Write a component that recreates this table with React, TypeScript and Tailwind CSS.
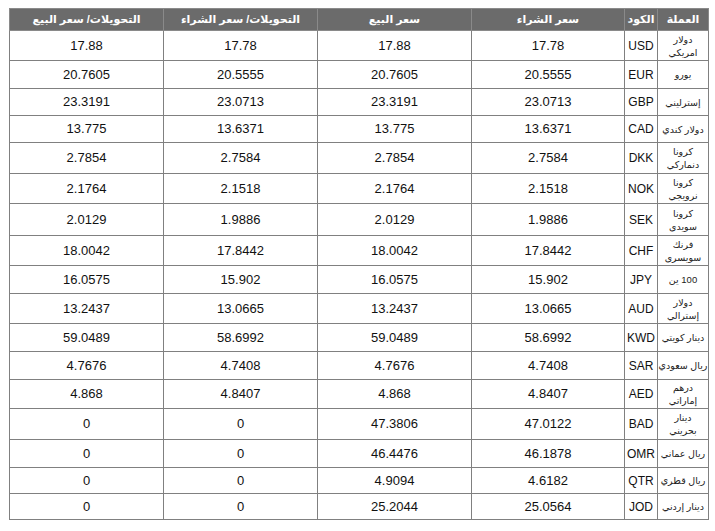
import React from "react";

interface Rate {
  name: string[];
  code: string;
  buy: string;
  sell: string;
  tBuy: string;
  tSell: string;
  h: string;
}

const rates: Rate[] = [
  { name: ["دولار", "امريكي"], code: "USD", buy: "17.78", sell: "17.88", tBuy: "17.78", tSell: "17.88", h: "h-[30px]" },
  { name: ["يورو"], code: "EUR", buy: "20.5555", sell: "20.7605", tBuy: "20.5555", tSell: "20.7605", h: "h-[28px]" },
  { name: ["إسترليني"], code: "GBP", buy: "23.0713", sell: "23.3191", tBuy: "23.0713", tSell: "23.3191", h: "h-[27px]" },
  { name: ["دولار كندي"], code: "CAD", buy: "13.6371", sell: "13.775", tBuy: "13.6371", tSell: "13.775", h: "h-[27px]" },
  { name: ["كرونا", "دنماركي"], code: "DKK", buy: "2.7584", sell: "2.7854", tBuy: "2.7584", tSell: "2.7854", h: "h-[31px]" },
  { name: ["كرونا", "نرويجي"], code: "NOK", buy: "2.1518", sell: "2.1764", tBuy: "2.1518", tSell: "2.1764", h: "h-[30px]" },
  { name: ["كرونا", "سويدى"], code: "SEK", buy: "1.9886", sell: "2.0129", tBuy: "1.9886", tSell: "2.0129", h: "h-[32px]" },
  { name: ["فرنك", "سويسرى"], code: "CHF", buy: "17.8442", sell: "18.0042", tBuy: "17.8442", tSell: "18.0042", h: "h-[30px]" },
  { name: ["100 ين"], code: "JPY", buy: "15.902", sell: "16.0575", tBuy: "15.902", tSell: "16.0575", h: "h-[28px]" },
  { name: ["دولار", "إسترالي"], code: "AUD", buy: "13.0665", sell: "13.2437", tBuy: "13.0665", tSell: "13.2437", h: "h-[30px]" },
  { name: ["دينار كويتي"], code: "KWD", buy: "58.6992", sell: "59.0489", tBuy: "58.6992", tSell: "59.0489", h: "h-[28px]" },
  { name: ["ريال سعودي"], code: "SAR", buy: "4.7408", sell: "4.7676", tBuy: "4.7408", tSell: "4.7676", h: "h-[28px]" },
  { name: ["درهم", "إماراتي"], code: "AED", buy: "4.8407", sell: "4.868", tBuy: "4.8407", tSell: "4.868", h: "h-[29px]" },
  { name: ["دينار", "بحريني"], code: "BAD", buy: "47.0122", sell: "47.3806", tBuy: "0", tSell: "0", h: "h-[31px]" },
  { name: ["ريال عماني"], code: "OMR", buy: "46.1878", sell: "46.4476", tBuy: "0", tSell: "0", h: "h-[28px]" },
  { name: ["ريال قطري"], code: "QTR", buy: "4.6182", sell: "4.9094", tBuy: "0", tSell: "0", h: "h-[26px]" },
  { name: ["دينار إردني"], code: "JOD", buy: "25.0564", sell: "25.2044", tBuy: "0", tSell: "0", h: "h-[26px]" },
];

const th = "border border-[#8a8a8a] bg-[#6b6b6b] text-white font-bold text-[11px] text-center p-0";
const td = "border border-[#808080] text-center text-[13px] text-[#111] p-0";

export default function App() {
  return (
    <div className="bg-white min-h-[531px] pt-[8px] pl-[9px] font-['Liberation_Sans','DejaVu_Sans',sans-serif]">
      <table dir="rtl" className="w-[699px] table-fixed border-collapse border border-[#808080]">
        <colgroup>
          <col className="w-[51px]" />
          <col className="w-[33px]" />
          <col className="w-[153px]" />
          <col className="w-[154px]" />
          <col className="w-[154px]" />
          <col className="w-[154px]" />
        </colgroup>
        <thead>
          <tr className="h-[22px]">
            <th className={th}>العملة</th>
            <th className={th}>الكود</th>
            <th className={th}>سعر الشراء</th>
            <th className={th}>سعر البيع</th>
            <th className={th}>التحويلات/ سعر الشراء</th>
            <th className={th}>التحويلات/ سعر البيع</th>
          </tr>
        </thead>
        <tbody>
          {rates.map((r) => (
            <tr key={r.code} className={r.h}>
              <td className="border border-[#808080] text-center text-[9.5px] leading-[13px] text-[#222] p-0 whitespace-nowrap">
                {r.name.map((line) => (
                  <div key={line}>{line}</div>
                ))}
              </td>
              <td className="border border-[#808080] text-center text-[12px] text-[#111] p-0" dir="ltr">
                {r.code}
              </td>
              <td className={td} dir="ltr">{r.buy}</td>
              <td className={td} dir="ltr">{r.sell}</td>
              <td className={td} dir="ltr">{r.tBuy}</td>
              <td className={td} dir="ltr">{r.tSell}</td>
            </tr>
          ))}
        </tbody>
      </table>
    </div>
  );
}
